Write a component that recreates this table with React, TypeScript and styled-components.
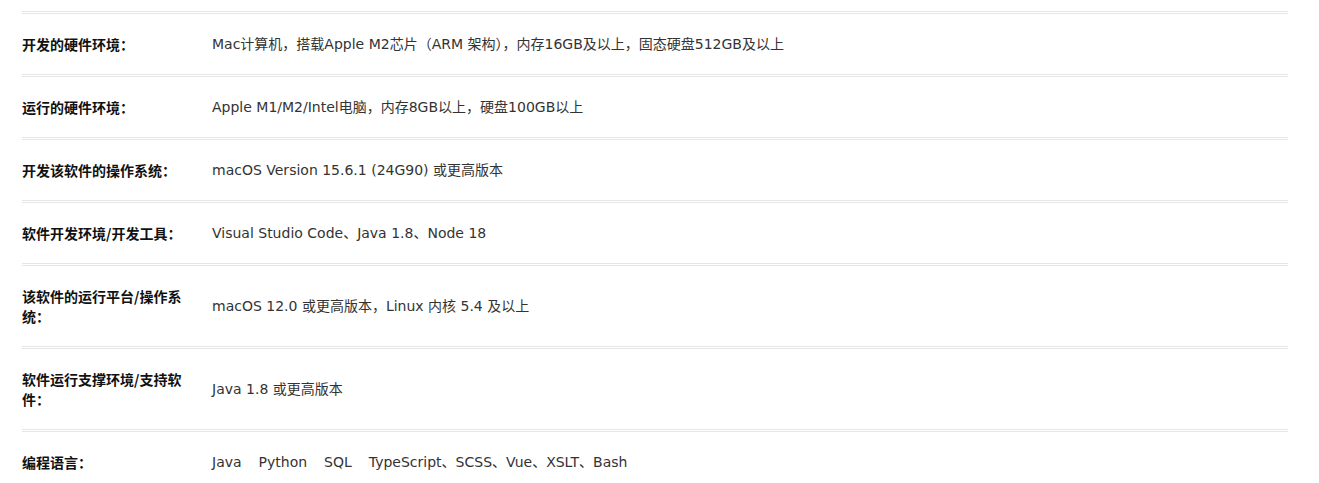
import React from "react";
import styled, { createGlobalStyle } from "styled-components";

type Item = {
  label: string;
  value?: string;
  tags?: string[];
};

const items: Item[] = [
  {
    label: "开发的硬件环境：",
    value: "Mac计算机，搭载Apple M2芯片（ARM 架构），内存16GB及以上，固态硬盘512GB及以上",
  },
  { label: "运行的硬件环境：", value: "Apple M1/M2/Intel电脑，内存8GB以上，硬盘100GB以上" },
  { label: "开发该软件的操作系统：", value: "macOS Version 15.6.1 (24G90) 或更高版本" },
  { label: "软件开发环境/开发工具：", value: "Visual Studio Code、Java 1.8、Node 18" },
  { label: "该软件的运行平台/操作系统：", value: "macOS 12.0 或更高版本，Linux 内核 5.4 及以上" },
  { label: "软件运行支撑环境/支持软件：", value: "Java 1.8 或更高版本" },
  {
    label: "编程语言：",
    tags: ["Java", "Python", "SQL", "TypeScript、SCSS、Vue、XSLT、Bash"],
  },
];

const GlobalStyle = createGlobalStyle`
  body {
    margin: 0;
    background: #fff;
    font-family: "DejaVu Sans", "Noto Sans CJK SC", sans-serif;
  }
`;

const App = () => {
  return (
    <>
      <GlobalStyle />
      <Page>
        <InfoList>
          {items.map((item) => (
            <Row key={item.label}>
              <Label>{item.label}</Label>
              <Value>
                {item.tags
                  ? item.tags.map((t) => <Tag key={t}>{t}</Tag>)
                  : item.value}
              </Value>
            </Row>
          ))}
        </InfoList>
      </Page>
    </>
  );
};

export default App;

const Tag = styled.span`
  margin-right: 17px;
`;

const Value = styled.div`
  display: flex;
  align-items: center;
  flex-wrap: wrap;
  font-size: 14px;
  line-height: 20px;
  color: #333;
`;

const Label = styled.div`
  width: 168px;
  font-family: "Noto Sans CJK SC", "DejaVu Sans", sans-serif;
  font-size: 14px;
  font-weight: 700;
  line-height: 20px;
  color: #111;
`;

const Row = styled.div`
  display: grid;
  grid-template-columns: 190px 1fr;
  align-items: center;
  padding: 20px 0;
  border-top: 3px double #e6e6e6;
`;

const InfoList = styled.div`
  width: 1266px;
`;

const Page = styled.div`
  padding: 11px 0 0 22px;
`;
